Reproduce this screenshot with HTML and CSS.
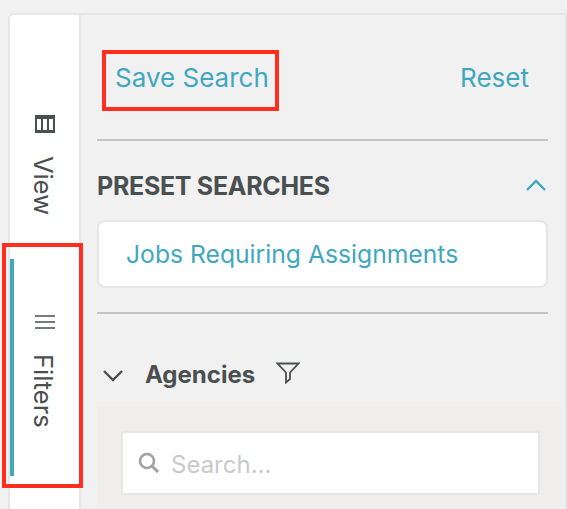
FILE: index.html
```html
<!DOCTYPE html>
<html lang="en">
<head>
<meta charset="utf-8">
<title>Filters</title>
<link rel="stylesheet" href="styles.css">
</head>
<body>
<div class="panel">
  <nav class="rail">
    <div class="tab tab-view">
      <svg class="tab-icon" width="20" height="18" viewBox="0 0 20 18"><path fill-rule="evenodd" d="M0 0h20v18H0z M2 4h4v11H2z M8 4h4v11H8z M14 4h4v11h-4z" fill="#4a4f50"/></svg>
      <span class="tab-label">View</span>
    </div>
    <div class="tab tab-filters">
      <span class="active-bar"></span>
      <svg class="tab-icon" width="20" height="16" viewBox="0 0 20 16"><path d="M0 2h20M0 8h20M0 14h20" fill="none" stroke="#4a4f50" stroke-width="1.6"/></svg>
      <span class="tab-label">Filters</span>
      <span class="red-box red-box-tab"></span>
    </div>
  </nav>
  <main class="content">
    <div class="actions">
      <a class="link save">Save Search<span class="red-box red-box-save"></span></a>
      <a class="link">Reset</a>
    </div>
    <hr class="rule">
    <div class="preset-head">
      <h2 class="preset-title">PRESET SEARCHES</h2>
      <svg class="preset-chevron" width="22" height="14" viewBox="0 0 22 14"><path d="M2 12l9-9 9 9" fill="none" stroke="#3fa7bf" stroke-width="2.4"/></svg>
    </div>
    <div class="card">Jobs Requiring Assignments</div>
    <hr class="rule rule-second">
    <div class="facet-head">
      <svg width="22" height="14" viewBox="0 0 22 14"><path d="M2 3l9 9 9-9" fill="none" stroke="#4a4f50" stroke-width="2.4"/></svg>
      <h3 class="facet-title">Agencies</h3>
      <svg class="funnel" width="24" height="22" viewBox="0 0 24 22"><path d="M1.500 1.500h21l-8.500 9v6.500l-4 3.500v-10z" fill="none" stroke="#4a4f50" stroke-width="1.8" stroke-linejoin="miter"/></svg>
    </div>
    <div class="facet-body">
      <div class="search">
        <svg width="22" height="22" viewBox="0 0 22 22"><circle cx="9" cy="9" r="7" fill="none" stroke="#a0a0a0" stroke-width="2.6"/><path d="M14 14l6 6" stroke="#a0a0a0" stroke-width="3"/></svg>
        <span class="placeholder">Search...</span>
      </div>
    </div>
  </main>
</div>
</body>
</html>
```
FILE: styles.css
```css
html, body { margin: 0; height: 509px; overflow: hidden; }
body {
  background: #f1f1f1;
  padding: 13px 0 0 8px;
  box-sizing: border-box;
  font-family: "Inter", "Liberation Sans", sans-serif;
  color: #4a4f50;
}
.panel {
  display: flex;
  width: 559px;
  height: 520px;
  box-sizing: border-box;
  border: solid #e6e6e6;
  border-width: 2px 2px 0 2px;
  border-top-left-radius: 6px;
}
.rail {
  flex: none;
  width: 71px;
  height: 100%;
  background: #fff;
  border-right: 2px solid #e6e6e6;
  border-top-left-radius: 4px;
  padding-top: 100px;
  box-sizing: border-box;
  display: flex;
  flex-direction: column;
}
.tab {
  position: relative;
  display: flex;
  flex-direction: column;
  align-items: center;
}
.tab-view { height: 144px; }
.tab-view .tab-icon { margin-bottom: 23px; }
.tab-filters { height: 217px; padding-top: 55px; box-sizing: border-box; }
.tab-filters .tab-icon { margin-bottom: 24px; }
.tab-label {
  writing-mode: vertical-rl;
  font-size: 25.500px;
  line-height: 24px;
  color: #4a4f50;
  margin-right: 4px;
}
.active-bar {
  position: absolute;
  left: 0;
  top: 0;
  bottom: 0;
  width: 4px;
  background: #3fa7bf;
}
.red-box {
  position: absolute;
  border: 4px solid #ff2f1f;
  box-sizing: border-box;
  pointer-events: none;
}
.red-box-tab { left: -8px; top: -16px; width: 81px; height: 245px; }
.red-box-save { left: -13px; top: -12px; width: 177px; height: 61px; }
.content {
  flex: 1;
  min-width: 0;
  padding: 0 0 0 16px;
}
.actions {
  display: flex;
  justify-content: space-between;
  height: 124px;
  padding: 47px 36px 0 18px;
  box-sizing: border-box;
}
.link {
  position: relative;
  font-size: 26px;
  line-height: 32px;
  color: #3fa7bf;
}
.rule {
  margin: 0;
  width: 451px;
  height: 2px;
  border: 0;
  background: #c4c4c4;
}
.preset-head {
  width: 451px;
  height: 79px;
  box-sizing: border-box;
  padding: 10px 1px 0 0;
  display: flex;
  align-items: center;
  justify-content: space-between;
}
.preset-chevron { margin-top: -2px; }
.preset-title {
  margin: 0;
  font-size: 25px;
  font-weight: 700;
  line-height: 30px;
  letter-spacing: -0.3px;
}
.card {
  width: 451px;
  height: 68px;
  box-sizing: border-box;
  background: #fff;
  border: 2px solid #e6e6e6;
  border-radius: 8px;
  padding-left: 27px;
  font-size: 24.700px;
  line-height: 64px;
  color: #3fa7bf;
}
.rule-second { margin-top: 24px; }
.facet-head {
  height: 93px;
  box-sizing: border-box;
  padding: 28px 0 0 5px;
  display: flex;
  align-items: center;
}
.funnel { margin-top: -3px; }
.facet-title {
  margin: 0 21px 0 21px;
  font-size: 24px;
  font-weight: 700;
  line-height: 30px;
}
.facet-body {
  background: #efeeed;
  padding: 24px 26px 30px 24px;
}
.search {
  height: 64px;
  width: 419px;
  box-sizing: border-box;
  background: #fff;
  border: 2px solid #e6e6e6;
  border-radius: 3px;
  display: flex;
  align-items: center;
  padding-left: 15px;
  gap: 11px;
}
.placeholder { font-size: 24px; line-height: 30px; padding-top: 3px; color: #c9c9c9; }
```
